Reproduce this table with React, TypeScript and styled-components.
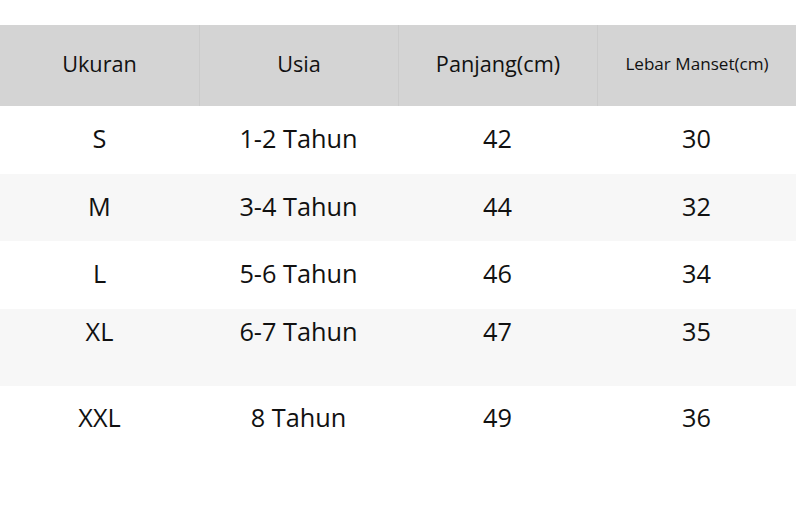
import React from "react";
import styled, { createGlobalStyle } from "styled-components";

const GlobalStyle = createGlobalStyle`
  body {
    margin: 0;
    background: #ffffff;
    font-family: "Open Sans", "Noto Sans", sans-serif;
    color: #111111;
  }
`;

const Page = styled.div`
  padding-top: 25px;
  width: 797px;
`;

const Table = styled.div`
  width: 796px;
`;

const HeaderRow = styled.div`
  display: grid;
  grid-template-columns: 199px 199px 199px 199px;
  height: 81px;
  background: #d4d4d4;
`;

const HeadCell = styled.div<{ $small?: boolean; $first?: boolean }>`
  display: flex;
  align-items: center;
  justify-content: center;
  padding-bottom: 4px;
  font-size: ${(p) => (p.$small ? "17.1px" : "21.7px")};
  border-left: ${(p) => (p.$first ? "none" : "1px solid #cbcbcb")};
`;

const Row = styled.div<{ $shade: boolean; $height: number; $top?: number }>`
  display: grid;
  grid-template-columns: 199px 199px 199px 199px;
  height: ${(p) => p.$height}px;
  background: ${(p) => (p.$shade ? "#f7f7f7" : "#ffffff")};
  align-items: ${(p) => (p.$top !== undefined ? "start" : "center")};
  padding-top: ${(p) => p.$top ?? 0}px;
  padding-bottom: ${(p) => (p.$top !== undefined ? 0 : 4)}px;
  box-sizing: border-box;
`;

const Cell = styled.div`
  text-align: center;
  font-size: 25.3px;
  line-height: 34px;
`;

const headers = ["Ukuran", "Usia", "Panjang(cm)", "Lebar Manset(cm)"];

const rows = [
  { cells: ["S", "1-2 Tahun", "42", "30"], height: 68 },
  { cells: ["M", "3-4 Tahun", "44", "32"], height: 67 },
  { cells: ["L", "5-6 Tahun", "46", "34"], height: 68 },
  { cells: ["XL", "6-7 Tahun", "47", "35"], height: 77, top: 5 },
  { cells: ["XXL", "8 Tahun", "49", "36"], height: 66 },
];

const App = () => {
  return (
    <Page>
      <GlobalStyle />
      <Table>
        <HeaderRow>
          {headers.map((h, i) => (
            <HeadCell key={h} $first={i === 0} $small={i === 3}>
              {h}
            </HeadCell>
          ))}
        </HeaderRow>
        {rows.map((r, i) => (
          <Row key={r.cells[0]} $shade={i % 2 === 1} $height={r.height} $top={r.top}>
            {r.cells.map((c, j) => (
              <Cell key={j}>{c}</Cell>
            ))}
          </Row>
        ))}
      </Table>
    </Page>
  );
};

export default App;
